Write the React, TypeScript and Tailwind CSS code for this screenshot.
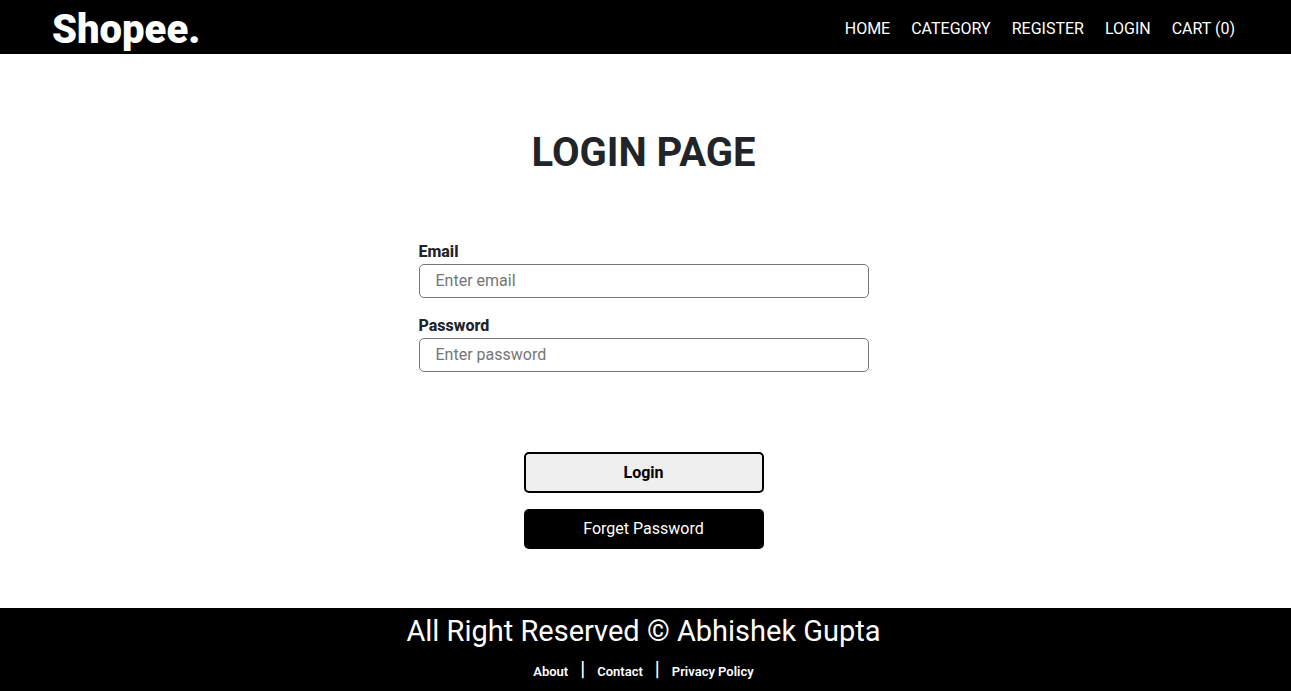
import React from "react";

const navItems = ["HOME", "CATEGORY", "REGISTER", "LOGIN", "CART (0)"];

export default function App() {
  return (
    <div className="flex min-h-screen flex-col bg-white font-[Roboto,sans-serif] text-base text-[#212529]">
      <header className="flex h-[54px] items-center justify-between bg-black pl-[52px] pr-14 pt-1 text-white">
        <a href="#" className="pt-0.5 text-[40px] font-black leading-[48px]">Shopee.</a>
        <nav className="flex gap-[21px]">
          {navItems.map((item) => (
            <a key={item} href="#">{item}</a>
          ))}
        </nav>
      </header>

      <main className="flex grow flex-col items-center pr-1 pt-[75px]">
        <h1 className="text-[40px] font-bold leading-[48px]">LOGIN PAGE</h1>
        <form className="mt-[63px] flex w-full max-w-[450px] flex-col items-center" onSubmit={(e) => e.preventDefault()}>
          <label htmlFor="email" className="w-full font-extrabold">Email</label>
          <input id="email" type="email" placeholder="Enter email" className="mb-4 h-[34px] w-full rounded-[5px] border border-[#767676] px-4 pb-0.5 placeholder:text-[#757575]" />
          <label htmlFor="password" className="w-full font-extrabold">Password</label>
          <input id="password" type="password" placeholder="Enter password" className="h-[34px] w-full rounded-[5px] border border-[#767676] px-4 pb-0.5 placeholder:text-[#757575]" />
          <button type="submit" className="mt-20 h-[41px] w-60 rounded-[5px] border-2 border-black bg-[#efefef] font-bold text-black">Login</button>
          <button type="button" className="mt-4 h-10 w-60 rounded-[5px] bg-black text-white">Forget Password</button>
        </form>
      </main>

      <footer className="flex h-[83px] flex-col items-center bg-black pr-1 pt-1 text-white">
        <p className="text-[29px] leading-[38px]">All Right Reserved © Abhishek Gupta</p>
        <div className="mt-[7px] flex items-baseline gap-3 text-[13px] font-semibold">
          <a href="#">About</a>
          <span className="text-xl font-medium leading-6">|</span>
          <a href="#">Contact</a>
          <span className="text-xl font-medium leading-6">|</span>
          <a href="#">Privacy Policy</a>
        </div>
      </footer>
    </div>
  );
}
